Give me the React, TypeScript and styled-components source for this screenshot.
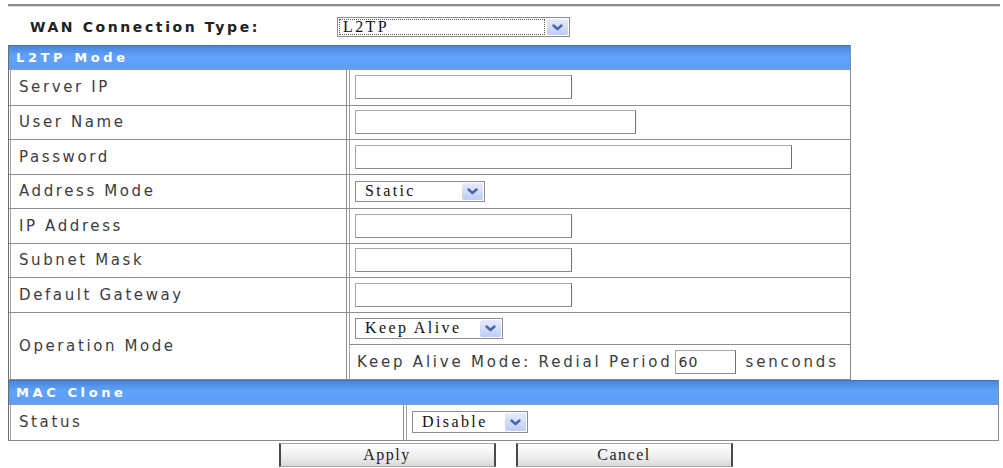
import React from 'react';
import styled, { createGlobalStyle } from 'styled-components';

const Global = createGlobalStyle`
  html, body { margin: 0; padding: 0; background: #fff; }
  body { font-family: "DejaVu Sans", Verdana, sans-serif; color: #333; }
  * { box-sizing: border-box; }
`;

const Page = styled.div`
  width: 1003px;
  height: 468px;
  padding: 4px 0 0 8px;
  overflow: hidden;
`;

const Rule = styled.div`
  width: 992px;
  height: 2px;
  background: #8c8c8c;
  box-shadow: 0 1px 0 #d8d8d8;
`;

const TypeRow = styled.div`
  display: grid;
  grid-template-columns: 329px auto;
  align-items: center;
  height: 39px;
  padding-top: 3px;
`;

const TypeLabel = styled.div`
  padding-left: 22px;
  font-weight: bold;
  font-size: 14px;
  letter-spacing: 2.6px;
  color: #222;
`;

const Panel = styled.section<{ $width: number }>`
  width: ${p => p.$width}px;
  border-left: 1px solid #6e6e6e;
  border-right: 1px solid #8a8a8a;
  border-bottom: 1px solid #8a8a8a;
  display: flex;
  flex-direction: column;
`;

const Bar = styled.div`
  height: 25px;
  display: flex;
  align-items: center;
  padding-left: 7px;
  background: linear-gradient(#4a86dc, #61a3fb 45%, #5c9df5);
  border-top: 1px solid #4274be;
  border-bottom: 1px solid #8d9bb0;
  color: #fff;
  font-weight: bold;
  font-size: 13px;
  letter-spacing: 3.6px;
`;

const Row = styled.div<{ $label: number; $height?: number }>`
  display: grid;
  grid-template-columns: ${p => p.$label}px 1fr;
  height: ${p => p.$height ?? 34.5}px;
  & + & { border-top: 1px solid #8e8e8e; }
`;

const Label = styled.div`
  display: flex;
  align-items: center;
  margin-left: 1px;
  padding-left: 8px;
  border-left: 1px solid #a4a4a4;
  border-right: 1px solid #8e8e8e;
  font-size: 15px;
  letter-spacing: 2.6px;
  color: #3c3c3c;
  white-space: nowrap;
`;

const Value = styled.div`
  display: flex;
  align-items: center;
  margin-left: 2px;
  padding-left: 5px;
  border-left: 1px solid #a4a4a4;
`;

const Stack = styled.div`
  display: flex;
  flex-direction: column;
  margin-left: 2px;
  border-left: 1px solid #a4a4a4;
`;

const SubCell = styled.div<{ $height: number }>`
  display: flex;
  align-items: center;
  height: ${p => p.$height}px;
  padding-left: 5px;
  & + & { border-top: 1px solid #8e8e8e; }
`;

const Note = styled.span`
  margin-left: 2px;
  font-size: 15px;
  letter-spacing: 2.8px;
  color: #3c3c3c;
  white-space: nowrap;
`;

const Field = styled.input<{ $w: number }>`
  width: ${p => p.$w}px;
  height: 24px;
  margin: 0;
  padding: 0 3px;
  border: 1px solid #a8a8a8;
  border-right-color: #707070;
  border-bottom-color: #8a8a8a;
  background: #fff;
  font-family: "DejaVu Sans", sans-serif;
  font-size: 14px;
  letter-spacing: 1px;
  color: #333;
  outline: none;
`;

const PeriodField = styled(Field)`
  margin: 0 8px 0 2px;
`;

const Picker = styled.div<{ $w: number; $h?: number }>`
  width: ${p => p.$w}px;
  height: ${p => p.$h ?? 21}px;
  display: flex;
  align-items: stretch;
  padding: 1px;
  border: 1px solid #8d8d8d;
  background: #fff;
`;

const PickText = styled.span<{ $focus?: boolean }>`
  flex: 1;
  display: flex;
  align-items: center;
  padding-left: ${p => (p.$focus ? 4 : 8)}px;
  font-family: "Liberation Serif", "Times New Roman", serif;
  font-size: 16px;
  letter-spacing: 2.4px;
  color: #111;
  ${p => p.$focus && 'outline: 1px dotted #555; outline-offset: -1px;'}
`;

const Arrow = styled.span`
  width: 21px;
  margin-left: 2px;
  display: flex;
  align-items: center;
  justify-content: center;
  border-radius: 2px;
  background: linear-gradient(#e6ecfc, #bfcdf3);
`;

const Actions = styled.div`
  display: flex;
  justify-content: center;
  gap: 20px;
  margin-top: 2px;
`;

const Button = styled.button`
  width: 217px;
  height: 24px;
  padding: 0;
  border: 1px solid #a6a6a6;
  border-left: 2px solid #4a4a4a;
  border-right: 2px solid #4a4a4a;
  background: linear-gradient(#ffffff, #f0f0f0 55%, #d9d9d9);
  font-family: "Liberation Serif", "Times New Roman", serif;
  font-size: 16px;
  letter-spacing: 1.5px;
  color: #222;
`;

function Chevron() {
  return (
    <svg width="11" height="7" viewBox="0 0 11 7">
      <polyline points="1.5,1.5 5.5,5 9.5,1.5" fill="none" stroke="#4766ad" strokeWidth="2.4" strokeLinecap="round" strokeLinejoin="round" />
    </svg>
  );
}

function Select(p: { text: string; w: number; h?: number; focus?: boolean }) {
  return (
    <Picker $w={p.w} $h={p.h}>
      <PickText $focus={p.focus}>{p.text}</PickText>
      <Arrow><Chevron /></Arrow>
    </Picker>
  );
}

const fields: { label: string; w?: number; select?: string }[] = [
  { label: 'Server IP', w: 217 },
  { label: 'User Name', w: 281 },
  { label: 'Password', w: 437 },
  { label: 'Address Mode', select: 'Static' },
  { label: 'IP Address', w: 217 },
  { label: 'Subnet Mask', w: 217 },
  { label: 'Default Gateway', w: 217 },
];

export default function App() {
  return (
    <Page>
      <Global />
      <Rule />
      <TypeRow>
        <TypeLabel>WAN Connection Type:</TypeLabel>
        <Select text="L2TP" w={233} h={20} focus />
      </TypeRow>

      <Panel $width={843}>
        <Bar>L2TP Mode</Bar>
        {fields.map(f => (
          <Row key={f.label} $label={338}>
            <Label>{f.label}</Label>
            <Value>
              {f.select ? <Select text={f.select} w={130} /> : <Field $w={f.w!} type={f.label === 'Password' ? 'password' : 'text'} defaultValue="" />}
            </Value>
          </Row>
        ))}
        <Row $label={338} $height={67}>
          <Label>Operation Mode</Label>
          <Stack>
            <SubCell $height={31}>
              <Select text="Keep Alive" w={148} />
            </SubCell>
            <SubCell $height={35}>
              <Note>Keep Alive Mode: Redial Period</Note>
              <PeriodField $w={61} defaultValue="60" />
              <Note>senconds</Note>
            </SubCell>
          </Stack>
        </Row>
      </Panel>

      <Panel $width={991}>
        <Bar>MAC Clone</Bar>
        <Row $label={395} $height={35}>
          <Label>Status</Label>
          <Value>
            <Select text="Disable" w={116} h={22} />
          </Value>
        </Row>
      </Panel>

      <Actions>
        <Button>Apply</Button>
        <Button>Cancel</Button>
      </Actions>
    </Page>
  );
}
